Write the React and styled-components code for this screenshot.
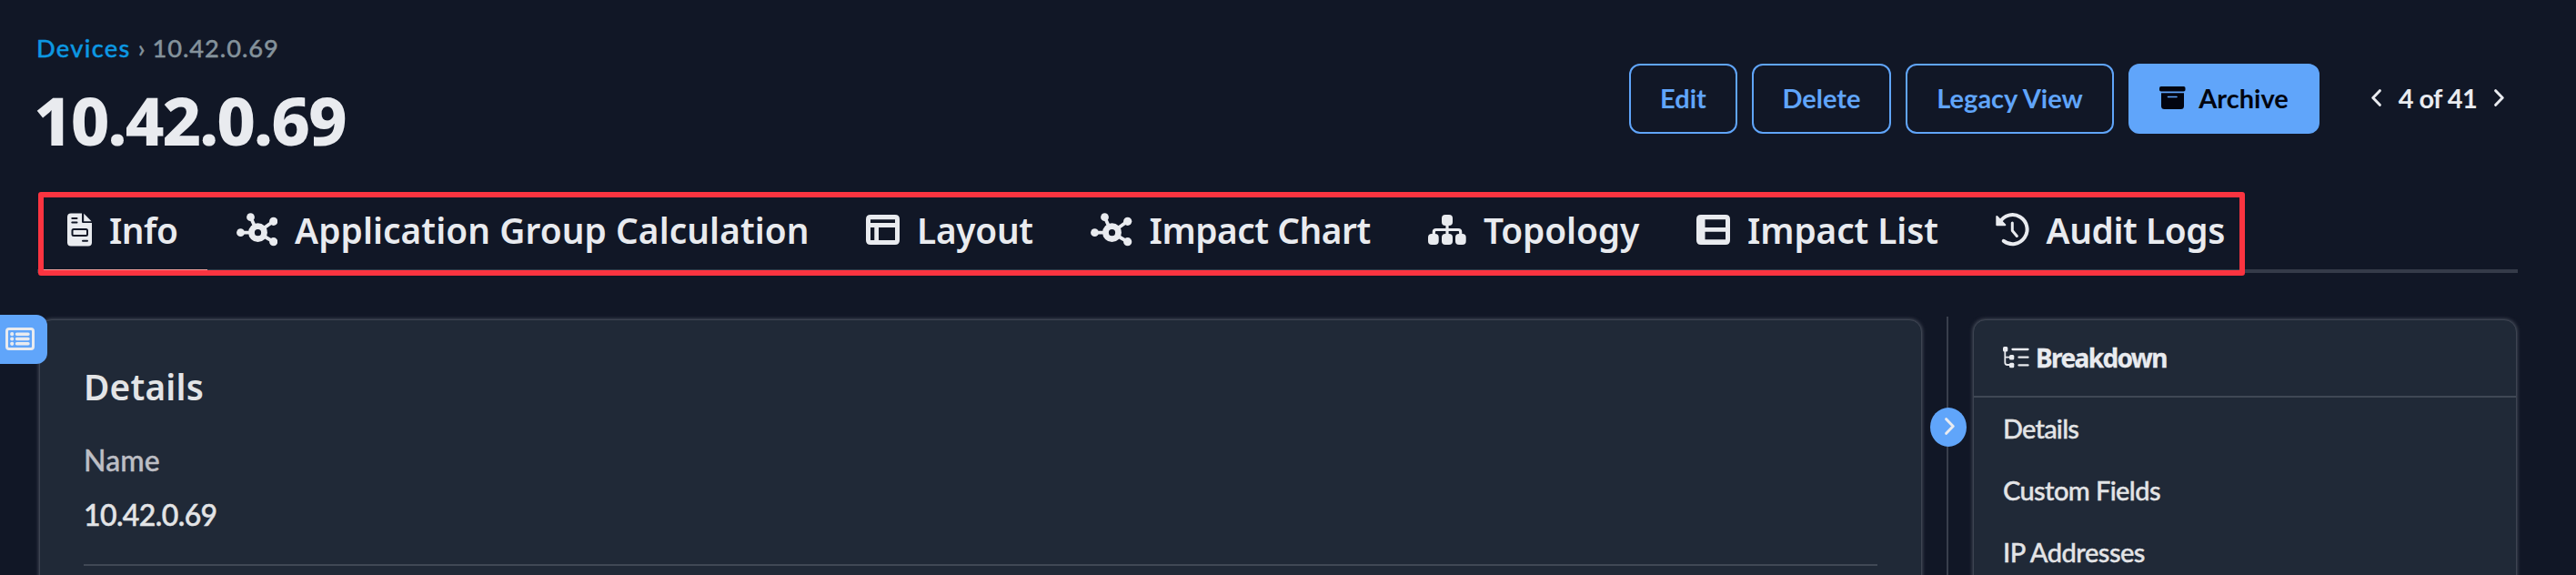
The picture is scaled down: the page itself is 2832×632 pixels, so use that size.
import React from "react";
import styled, { createGlobalStyle } from "styled-components";

const c = {
  page: "#111726",
  panel: "#202937",
  line: "#404855",
  rule: "#353b49",
  text: "#e9ebef",
  blue: "#60a5fa",
  red: "#fb3440",
};
const heading = '"Noto Sans", "Open Sans", sans-serif';
const body = 'Lato, "Open Sans", sans-serif';

const Global = createGlobalStyle`
  * { box-sizing: border-box; }
  body { margin: 0; background: ${c.page}; }
`;

const Page = styled.div`
  position: relative;
  width: 2832px;
  height: 632px;
  overflow: hidden;
  padding: 0 64px 0 41px;
  background: ${c.page};
  color: ${c.text};
  font-family: ${body};
  white-space: nowrap;
`;

const Header = styled.header`
  display: flex;
  justify-content: space-between;
  height: 211px;
  padding-top: 36px;
`;

const Crumbs = styled.nav`
  display: flex;
  align-items: center;
  gap: 8px;
  height: 33px;
  margin: 0 0 23px -1px;
  font-size: 27.3px;
  font-weight: 500;
  color: #84929b;
  -webkit-text-stroke: 0.4px;
`;
const CrumbLink = styled.a`
  color: #0c98e2;
  letter-spacing: 1.3px;
`;
const CrumbCurrent = styled.span`
  letter-spacing: 0.9px;
`;

const Title = styled.h1`
  margin: 0 0 0 -4px;
  font: 800 74px/80px ${heading};
  letter-spacing: -2px;
`;

const Actions = styled.div`
  display: flex;
  align-items: center;
  gap: 16px;
  height: 77px;
  margin-top: 34px;
`;

const Button = styled.button`
  display: flex;
  align-items: center;
  justify-content: center;
  gap: 14px;
  width: ${(p) => p.$width}px;
  height: 77px;
  padding: 0 0 2px;
  border: 2px solid ${c.blue};
  border-radius: 12px;
  background: ${(p) => (p.$solid ? c.blue : "transparent")};
  color: ${(p) => (p.$solid ? "#020510" : c.blue)};
  font: 700 29px/36px ${body};
`;

const Pager = styled.div`
  display: flex;
  align-items: center;
  justify-content: space-between;
  width: 146px;
  height: 77px;
  margin: 0 15px 0 41px;
  padding-bottom: 2px;
  font: 700 29px/36px ${body};
  letter-spacing: -0.6px;
`;

const Tabs = styled.nav`
  position: relative;
  display: flex;
  height: 89px;
  padding-left: 33px;
  border-bottom: 4px solid ${c.rule};
`;
const Tab = styled.a`
  display: flex;
  align-items: center;
  gap: 19px;
  width: ${(p) => p.$width}px;
  padding-bottom: 2px;
  font: 600 38.8px/50px ${heading};
  letter-spacing: ${(p) => p.$track}px;
`;
const Highlight = styled.div`
  position: absolute;
  left: 0.5px;
  top: 0;
  width: 2426px;
  height: 92px;
  border: 6px solid ${c.red};
  border-radius: 3px;
`;
const ActiveBar = styled.div`
  position: absolute;
  left: 6px;
  top: 85px;
  width: 181px;
  height: 2px;
  background: #f3a09b;
`;

const Content = styled.main`
  display: flex;
  height: 284px;
  margin: 48px 1px 0 2px;
`;
const Panel = styled.section`
  width: ${(p) => p.$width}px;
  height: 310px;
  margin-top: 3px;
  border: 1px solid #3d4451;
  border-radius: 14px;
  background: ${c.panel};
  box-shadow: 0 0 4px #565b68;
`;
const DetailsPanel = styled(Panel)`
  padding: 0 48px;
`;
const PanelTitle = styled.h2`
  margin: 48px 0 0;
  font: 600 38.8px/50px ${heading};
  letter-spacing: 0.2px;
  color: #e3e4e6;
`;
const FieldLabel = styled.div`
  margin-top: 36px;
  font: 500 32px/40px ${body};
  letter-spacing: 0.1px;
  color: #bdbec4;
  -webkit-text-stroke: 0.4px;
`;
const FieldValue = styled.div`
  height: 72px;
  padding-top: 20px;
  margin-bottom: 22px;
  font: 500 32px/40px ${body};
  letter-spacing: -0.6px;
  color: #e3e4e6;
  -webkit-text-stroke: 0.5px;
`;
const Divider = styled.hr`
  margin: 0;
  border: 0;
  border-top: 2px solid ${c.line};
`;

const Splitter = styled.div`
  position: relative;
  width: 2px;
  margin: 0 27px;
  background: #393f4c;
`;
const SplitHandle = styled.button`
  position: absolute;
  left: -18px;
  top: 100px;
  display: flex;
  align-items: center;
  justify-content: center;
  width: 40px;
  height: 43px;
  padding: 0 0 2px 3px;
  border: 0;
  border-radius: 50%;
  background: ${c.blue};
  color: ${c.text};
`;

const BreakdownHead = styled.div`
  display: flex;
  align-items: center;
  gap: 7px;
  height: 85px;
  padding: 0 0 2px 32px;
  border-bottom: 2px solid ${c.line};
  font: 700 28px/40px ${heading};
  letter-spacing: -1.6px;
  -webkit-text-stroke: 0.3px;
`;
const BreakdownItem = styled.a`
  display: block;
  height: 68px;
  padding-left: 32px;
  font: 500 29px/67px ${body};
  letter-spacing: ${(p) => p.$track}px;
  color: #e3e4e6;
  -webkit-text-stroke: 0.4px;
`;

const SideToggle = styled.button`
  position: absolute;
  left: 0;
  top: 346px;
  display: flex;
  align-items: center;
  width: 52px;
  height: 54px;
  padding: 0 0 1px 6px;
  border: 0;
  border-radius: 0 12px 12px 0;
  background: ${c.blue};
  color: ${c.text};
`;

const Icon = styled.svg.attrs((p) => ({
  width: p.$w,
  height: p.$h,
  viewBox: `0 0 ${p.$w} ${p.$h}`,
  fill: "none",
}))`
  flex: none;
  display: block;
`;

const Chevron = ({ left }) => (
  <Icon $w={11} $h={19}>
    <path
      d={left ? "M9.3 1.7 1.8 9.5l7.5 7.8" : "M1.7 1.7l7.5 7.8-7.5 7.8"}
      stroke="currentColor" strokeWidth="3" strokeLinecap="round" strokeLinejoin="round"
    />
  </Icon>
);

const InfoIcon = () => (
  <Icon $w={27} $h={37}>
    <path d="M4 .5h12v9.2q0 1.3 1.3 1.3H27v21.5q0 4-4 4H4q-4 0-4-4V4.5q0-4 4-4z" fill="currentColor" />
    <path d="M18.2.8v8.4h8.4z" fill="currentColor" />
    <path d="M5.3 6h5.2M5.3 10.5h5.2M17 30.7h5" stroke={c.page} strokeWidth="2" strokeLinecap="round" />
    <rect x="5.5" y="18" width="16.5" height="7" rx="1.5" stroke={c.page} strokeWidth="2" />
  </Icon>
);

const NetworkIcon = () => (
  <Icon $w={45.5} $h={37}>
    <path d="M4.3 21.7h13M15.5 4.7l5 11M40.5 9.3 29 17.5M40.5 31.7 30 25.5" stroke="currentColor" strokeWidth="3.8" />
    <circle cx="23.5" cy="21.7" r="7" stroke="currentColor" strokeWidth="6.8" />
    <circle cx="4.5" cy="21.7" r="4.4" fill="currentColor" />
    <circle cx="15.5" cy="4.7" r="4.4" fill="currentColor" />
    <circle cx="40.7" cy="9.3" r="4.6" fill="currentColor" />
    <circle cx="40.7" cy="31.7" r="4.6" fill="currentColor" />
  </Icon>
);

const LayoutIcon = () => (
  <Icon $w={37} $h={33}>
    <path
      fillRule="evenodd" fill="currentColor"
      d="M5 0h27q5 0 5 5v23q0 5-5 5H5q-5 0-5-5V5q0-5 5-5zM5 5.300V9h27V5.300zM5 14v14h4.300V14zM14 14v14h18V14z"
    />
  </Icon>
);

const TopologyIcon = () => (
  <Icon $w={42} $h={33}>
    <path d="M21 10v14M6.300 22v-3q0-2.500 2.500-2.500h24.400q2.500 0 2.500 2.500v3" stroke="currentColor" strokeWidth="3.2" />
    <rect x="15" y="0" width="12" height="12" rx="4" fill="currentColor" />
    <rect x="0" y="21" width="11.7" height="12" rx="4" fill="currentColor" />
    <rect x="15" y="21" width="12" height="12" rx="4" fill="currentColor" />
    <rect x="30" y="21" width="11.7" height="12" rx="4" fill="currentColor" />
  </Icon>
);

const ListIcon = () => (
  <Icon $w={37} $h={33}>
    <path
      fillRule="evenodd" fill="currentColor"
      d="M5 0h27q5 0 5 5v23q0 5-5 5H5q-5 0-5-5V5q0-5 5-5zM9.500 5.300V14h22.500V5.300zM9.500 18.700v8.600h22.500v-8.600z"
    />
  </Icon>
);

const HistoryIcon = () => (
  <Icon $w={36.5} $h={37}>
    <path d="M4.500 10.500A16 16 0 1 1 8.800 30.800" stroke="currentColor" strokeWidth="4" strokeLinecap="round" />
    <path d="M1.300 4v9.200h9z" fill="currentColor" stroke="currentColor" strokeWidth="2" strokeLinejoin="round" />
    <path d="M18.300 11v8.500l5 6" stroke="currentColor" strokeWidth="3" strokeLinecap="round" strokeLinejoin="round" />
  </Icon>
);

const ArchiveIcon = () => (
  <Icon $w={29} $h={25}>
    <rect x="0" y="0" width="28.5" height="5.5" rx="1.8" fill="currentColor" />
    <path d="M2 7.300h25V21.500q0 3.500-3.500 3.500h-18Q2 25 2 21.500z" fill="currentColor" />
    <path d="M9.500 11.500h9.500" stroke={c.blue} strokeWidth="1.6" strokeLinecap="round" />
  </Icon>
);

const TreeIcon = () => (
  <Icon $w={29} $h={24}>
    <path d="M2.300 3v14.500q0 2.500 2.500 2.500h4M2.300 11.700h6.500" stroke="currentColor" strokeWidth="1.8" />
    <path d="M10.500 3h17M17.500 11.700h10M17.500 20.400h10" stroke="currentColor" strokeWidth="2.3" strokeLinecap="round" />
    <rect x="0" y="0" width="5.3" height="5.5" rx="1.5" fill="currentColor" />
    <rect x="7" y="9" width="5.3" height="5.5" rx="1.5" fill="currentColor" />
    <rect x="7" y="17.7" width="5.3" height="5.5" rx="1.5" fill="currentColor" />
  </Icon>
);

const MenuIcon = () => (
  <Icon $w={32} $h={25}>
    <rect x="1.5" y="1.5" width="29" height="22" rx="2.5" stroke="currentColor" strokeWidth="3" />
    <path d="M12.500 7.200H25M12.500 12.500H25M12.500 17.800H25" stroke="currentColor" strokeWidth="3.4" strokeLinecap="round" />
    <path d="M7.200 7.200h.01M7.200 12.500h.01M7.200 17.800h.01" stroke="currentColor" strokeWidth="4.2" strokeLinecap="round" />
  </Icon>
);

const tabs = [
  ["Info", InfoIcon, 185.5, -0.5],
  ["Application Group Calculation", NetworkIcon, 692.5, 0.08],
  ["Layout", LayoutIcon, 247, -0.3],
  ["Impact Chart", NetworkIcon, 371, -0.45],
  ["Topology", TopologyIcon, 295, -0.1],
  ["Impact List", ListIcon, 329, -0.1],
  ["Audit Logs", HistoryIcon, 260, -0.4],
];

const sections = [
  ["Details", -0.8],
  ["Custom Fields", -0.6],
  ["IP Addresses", -0.5],
];

export default function App() {
  return (
    <Page>
      <Global />
      <Header>
        <div>
          <Crumbs>
            <CrumbLink>Devices</CrumbLink>
            <span>›</span>
            <CrumbCurrent>10.42.0.69</CrumbCurrent>
          </Crumbs>
          <Title>10.42.0.69</Title>
        </div>
        <Actions>
          <Button $width={119}>Edit</Button>
          <Button $width={153}>Delete</Button>
          <Button $width={229}>Legacy View</Button>
          <Button $width={210} $solid>
            <ArchiveIcon />
            Archive
          </Button>
          <Pager>
            <Chevron left />
            4 of 41
            <Chevron />
          </Pager>
        </Actions>
      </Header>

      <Tabs>
        {tabs.map(([label, Glyph, width, track]) => (
          <Tab key={label} $width={width} $track={track}>
            <Glyph />
            {label}
          </Tab>
        ))}
        <ActiveBar />
        <Highlight />
      </Tabs>

      <Content>
        <DetailsPanel $width={2070}>
          <PanelTitle>Details</PanelTitle>
          <FieldLabel>Name</FieldLabel>
          <FieldValue>10.42.0.69</FieldValue>
          <Divider />
        </DetailsPanel>
        <Splitter>
          <SplitHandle>
            <Chevron />
          </SplitHandle>
        </Splitter>
        <Panel $width={598}>
          <BreakdownHead>
            <TreeIcon />
            Breakdown
          </BreakdownHead>
          {sections.map(([label, track]) => (
            <BreakdownItem key={label} $track={track}>{label}</BreakdownItem>
          ))}
        </Panel>
      </Content>

      <SideToggle>
        <MenuIcon />
      </SideToggle>
    </Page>
  );
}
